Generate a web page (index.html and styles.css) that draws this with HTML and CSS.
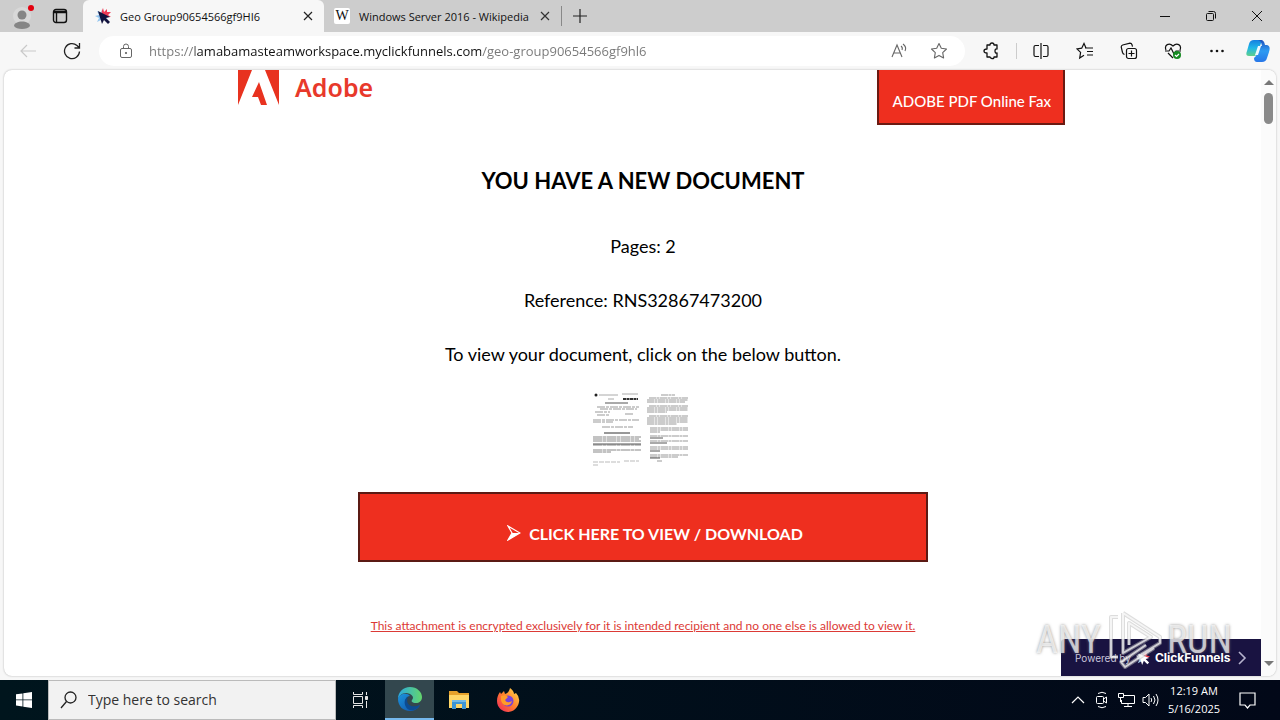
FILE: index.html
```html
<!DOCTYPE html>
<html lang="en">
<head>
  <meta charset="UTF-8">
  <meta name="viewport" content="width=device-width, initial-scale=1.0">
  <title>Desktop session</title>
  <link rel="stylesheet" href="styles.css">
</head>
<body>
  <div class="tabbar">
    <button class="profile" aria-label="Profile">
      <svg width="24" height="26" viewBox="0 0 24 26"><circle cx="10" cy="13" r="9" fill="#d8d8d8"/><circle cx="10" cy="12" r="4.500" fill="#858585"/><path d="M2 23c0-6 16-6 16 0-2 4-14 4-16 0z" fill="#858585"/><circle cx="19" cy="5" r="3" fill="#e3000f"/></svg>
    </button>
    <button class="workspaces" aria-label="Tab actions">
      <svg width="16" height="16" viewBox="0 0 16 16" fill="none" stroke="#111" stroke-width="1.4"><rect x="1.5" y="1.5" width="13" height="13" rx="2.5"/><path d="M2 4h12" stroke-width="2.500"/><path d="M4.500 4v10"/></svg>
    </button>
    <div class="tab active">
      <svg class="favicon" viewBox="0 0 16 16"><path d="M8 0l1 4 3-3v3l4 0-3 3 3 2-5 0-5-4z" fill="#ee3a55"/><path d="M7 1L6 5 2 3l2 4-4 1 4 2-2 4 4-2z" fill="#91c4ef"/><path d="M3 3l12 6-4 1 4 4-2 2-4-4-2 4z" fill="#12133e"/></svg>
      <span class="tab-title">Geo Group90654566gf9HI6</span>
      <button class="tab-close" aria-label="Close tab"><svg width="10" height="10" viewBox="0 0 10 10"><path d="M1 1l8 8M9 1L1 9" stroke="#222" stroke-width="1.2"/></svg></button>
    </div>
    <div class="tab">
      <span class="favicon wiki">W</span>
      <span class="tab-title">Windows Server 2016 - Wikipedia</span>
      <button class="tab-close" aria-label="Close tab"><svg width="10" height="10" viewBox="0 0 10 10"><path d="M1 1l8 8M9 1L1 9" stroke="#333" stroke-width="1.2"/></svg></button>
    </div>
    <button class="new-tab" aria-label="New tab"><svg width="14" height="14" viewBox="0 0 14 14"><path d="M7 0v14M0 7h14" stroke="#222" stroke-width="1.2"/></svg></button>
    <div class="window-buttons">
      <button aria-label="Minimize"><svg width="12" height="12" viewBox="0 0 12 12"><path d="M1 6.5h10" stroke="#111"/></svg></button>
      <button aria-label="Restore"><svg width="12" height="12" viewBox="0 0 12 12" fill="none" stroke="#111"><rect x="1.5" y="3.5" width="7" height="7" rx="1"/><path d="M3.5 1.5h5q2 0 2 2v5"/></svg></button>
      <button aria-label="Close"><svg width="12" height="12" viewBox="0 0 12 12"><path d="M1 1l10 10M11 1L1 11" stroke="#111"/></svg></button>
    </div>
  </div>

  <div class="toolbar">
    <button class="back" aria-label="Back"><svg width="18" height="18" viewBox="0 0 18 18" fill="none" stroke="#c9c9c9" stroke-width="1.2"><path d="M17 9H2M8 3L2 9l6 6"/></svg></button>
    <button class="reload" aria-label="Refresh"><svg width="18" height="18" viewBox="0 0 18 18" fill="none" stroke="#222" stroke-width="1.3"><path d="M16.5 9.5A7.5 7.5 0 1 1 14 3.5L16 5.5M16.500 1v5h-5"/></svg></button>
    <div class="address">
      <svg width="14" height="16" viewBox="0 0 14 16" fill="none" stroke="#666"><rect x="1.500" y="5.500" width="11" height="9" rx="1.500"/><path d="M4.500 5V3.500a2.500 2.500 0 0 1 5 0V5"/><circle cx="7" cy="10" r=".7" fill="#666"/></svg>
      <input class="url" type="text" aria-label="Address" value="https://lamabamasteamworkspace.myclickfunnels.com/geo-group90654566gf9hl6">
      <button class="read" aria-label="Read aloud"><svg width="17" height="16" viewBox="0 0 17 16" fill="none" stroke="#666" stroke-width="1.100"><path d="M1 14L6 2l5 12M3 10h6M10 3q2 1.500 1 4M12 1q4 3 2 7"/></svg></button>
      <button aria-label="Add to favorites"><svg width="18" height="18" viewBox="0 0 18 18" fill="none" stroke="#666" stroke-width="1.100" stroke-linejoin="round"><path d="M9 1.500l2.300 4.800 5.200.7-3.800 3.600.9 5.300L9 13.400l-4.600 2.500.9-5.300L1.500 7l5.200-.7z"/></svg></button>
    </div>
    <div class="tools">
      <button aria-label="Extensions"><svg width="18" height="18" viewBox="0 0 18 18" fill="none" stroke="#111" stroke-width="1.300"><path d="M4 3h3q0-2 2-2t2 2h3v4q-2-.5-2 2t2 2v4h-3q0 2-2 1.500T7 15H4v-4q-3 0-3-2t3-2z" stroke-linejoin="round"/></svg></button>
      <span class="divider"></span>
      <button aria-label="Split screen"><svg width="18" height="18" viewBox="0 0 18 18" fill="none" stroke="#111" stroke-width="1.200"><path d="M7 3.500H3.500q-1.500 0-1.500 1.500v8q0 1.500 1.500 1.500H7M11 3.500h3.500q1.500 0 1.500 1.500v8q0 1.500-1.500 1.500H11M9 1v16"/></svg></button>
      <button aria-label="Favorites"><svg width="18" height="18" viewBox="0 0 18 18" fill="none" stroke="#111" stroke-width="1.200"><path d="M10 6L8 1.500 5.700 6.200l-4.700.7 3.600 3.500L3.700 16 8 13.300M9 6h8M11 9.500h6M11 13h6"/></svg></button>
      <button aria-label="Collections"><svg width="18" height="18" viewBox="0 0 18 18" fill="none" stroke="#111" stroke-width="1.200"><rect x="6.500" y="6.500" width="10" height="10" rx="2"/><path d="M11.500 8.500v6M8.500 11.500h6M4.500 12.500q-1.500-.5-2-2L1.200 5q0-1.500 1.500-2L10 1.200q1.500 0 2 1.500l.5 2"/></svg></button>
      <button aria-label="Browser essentials"><svg width="18" height="18" viewBox="0 0 18 18" fill="none" stroke="#111" stroke-width="1.200"><path d="M2 8C0 3 5 0 9 4c4-4 9-1 7 4M1 9h4l2-3 3 6 2-3h5M4 11l5 5"/><circle cx="13" cy="13" r="4" fill="#168a22" stroke="none"/><path d="M11 13l1.500 1.500L15 12" stroke="#fff"/></svg></button>
      <button aria-label="Settings and more"><svg width="18" height="18" viewBox="0 0 18 18" fill="#111"><circle cx="3.500" cy="9" r="1.300"/><circle cx="9" cy="9" r="1.300"/><circle cx="14.500" cy="9" r="1.300"/></svg></button>
      <button class="copilot" aria-label="Copilot"><svg width="24" height="24" viewBox="0 0 24 24"><defs><linearGradient id="cp1" x2="0" y2="1"><stop stop-color="#147fe0"/><stop offset=".5" stop-color="#20b7e8"/><stop offset="1" stop-color="#5fd08a"/></linearGradient><linearGradient id="cp2" x2="0" y2="1"><stop stop-color="#1d4fbd"/><stop offset=".5" stop-color="#2e9bf2"/><stop offset="1" stop-color="#2877e8"/></linearGradient></defs><path d="M8 1h8l-4 12q-1 4-4 4H3q-4 0-2-5l2-7q1-4 5-4z" fill="url(#cp1)"/><path d="M12 1h3q3 0 4 5h2q4 1 2 7l-2 6q-1 4-5 4h-5q-3 0-3-4l2-2 3-10h3q-1-6-4-6z" fill="url(#cp2)"/><path d="M12 7h3l-3 9H9z" fill="#eefaff"/></svg></button>
    </div>
  </div>

  <div class="viewport">
    <main class="page">
      <article class="document">
        <header class="doc-header">
          <div class="brand">
            <svg width="41" height="35" viewBox="0 0 41 35" fill="#e8321f"><path d="M0 0h14L0 35zM27 0h14v35zM21 12l8 23h-6l-3-8h-6z"/></svg>
            <span>Adobe</span>
          </div>
          <div class="fax">ADOBE PDF Online Fax</div>
        </header>
        <h1>YOU HAVE A NEW DOCUMENT</h1>
        <p>Pages: 2</p>
        <p>Reference: RNS32867473200</p>
        <p>To view your document, click on the below button.</p>
        <svg class="thumbs" width="102" height="74" viewBox="0 0 102 74" fill="none" stroke="#888">
          <circle cx="6" cy="3" r="1.500" fill="#222" stroke="none"/>
          <path d="M9 3h19M32 2h16M18 7h6" stroke="#aaa"/>
          <path d="M33 7h15" stroke="#333" stroke-width="2" stroke-dasharray="3 .5"/>
          <path d="M15 11h23" stroke="#555"/>
          <path d="M7 15h42M10 17h37M5 20h15M35 22h9M7 23h13M3 28h46M3 30h20M12 35h31" stroke="#999" stroke-dasharray="8 1 3 1"/>
          <path d="M14 41h26" stroke="#333"/>
          <path d="M3 45h48M3 47h46M3 49h48M3 53h48M3 58h48M3 60h18" stroke-width="1.200" stroke-dasharray="9 .5 4 .5"/>
          <path d="M3 52h48" stroke="#555"/>
          <path d="M3 70h27M34 69h15M3 73h5" stroke="#bbb" stroke-dasharray="5 1"/>
          <path d="M71 3h14M59 6h39M57 8h41M57 10h38M59 14h39M57 16h41M57 18h41M57 20h20M59 24h39M57 26h41M57 28h41M57 30h41M57 32h30M60 36h38M60 38h38M60 40h10M60 44h38M60 49h38M60 55h38M60 57h38M60 63h38M60 65h28M67 69h5" stroke="#999" stroke-dasharray="7 .5 3 .5"/>
          <path d="M60 46h13M60 51h17M60 59h10M60 66h10" stroke="#555"/>
        </svg>
        <button class="download">
          <svg width="14" height="16" viewBox="0 0 14 16"><path d="M1 1l12 7L1 15l4-7z" fill="none" stroke="#fff" stroke-width="1.200"/><path d="M5 8h8L1 15z" fill="#fff"/></svg>
          CLICK HERE TO VIEW / DOWNLOAD
        </button>
        <a class="notice" href="#">This attachment is encrypted exclusively for it is intended recipient and no one else is allowed to view it.</a>
      </article>
    </main>
    <div class="scrollbar">
      <span class="arrow up"></span>
      <span class="thumb"></span>
      <span class="arrow down"></span>
    </div>
    <a class="powered" href="#">
      <span>Powered by</span>
      <svg width="14" height="14" viewBox="0 0 16 16"><path d="M8 0l1 4 3-3v4l4 1-5 3z" fill="#f0424f"/><path d="M7 1L6 5 2 3l2 4-4 1 4 2-2 4 4-2z" fill="#a9d0ef"/><path d="M3 3l12 5-4 1 4 4-2 2-4-4-2 5z" fill="#fff"/></svg>
      <strong>ClickFunnels</strong>
      <svg width="9" height="14" viewBox="0 0 9 14"><path d="M1 1l6 6-6 6" fill="none" stroke="#b6b3ce" stroke-width="1.600"/></svg>
    </a>
    <div class="watermark">
      <span>ANY</span>
      <svg width="56" height="64" viewBox="0 0 56 64" fill="none" stroke-linejoin="round"><g stroke="#bbb" stroke-opacity=".5" stroke-width="4"><path d="M12 9H5v40h7M17 5l37 24v6L31 49M17 5v40l28-16-22-14v22M48 40L19 59l-4-5 25-17"/></g><g stroke="#fff" stroke-opacity=".7" stroke-width="2"><path d="M12 9H5v40h7M17 5l37 24v6L31 49M17 5v40l28-16-22-14v22M48 40L19 59l-4-5 25-17"/></g></svg>
      <span>RUN</span>
    </div>
  </div>

  <div class="taskbar">
    <button class="start" aria-label="Start"><svg width="16" height="16" viewBox="0 0 16 16" fill="#fff"><path d="M0 2.300L6.500 1.400v6.100H0zM7.300 1.300L16 0v7.500H7.300zM0 8.300h6.500v6.200L0 13.600zM7.300 8.300H16V16l-8.700-1.300z"/></svg></button>
    <label class="search">
      <svg width="17" height="18" viewBox="0 0 17 18" fill="none" stroke="#222" stroke-width="1.300"><circle cx="10.500" cy="6.500" r="5.500"/><path d="M6.500 10.500L1 17"/></svg>
      <input type="text" aria-label="Search" placeholder="Type here to search">
    </label>
    <button class="app" aria-label="Task view"><svg width="16" height="16" viewBox="0 0 16 16" fill="none" stroke="#e6e6e6"><path d="M.5 0v2.500h9V0M.5 16v-2.500h9V16M.5 4.500h9v7h-9zM13.500 0v3M13.500 9v7"/><path d="M12.500 4.500h2v3h-2z" fill="#e6e6e6"/></svg></button>
    <button class="app open" aria-label="Edge"><svg width="24" height="24" viewBox="0 0 24 24"><defs><linearGradient id="e1"><stop stop-color="#2aa8df"/><stop offset="1" stop-color="#64d66c"/></linearGradient><linearGradient id="e2" x2="1" y2="1"><stop stop-color="#1b93dd"/><stop offset="1" stop-color="#114fa5"/></linearGradient></defs><path d="M0 12C0 5 5 0 12 0s12 5 12 10c0 4-3 6-6 6-4 0-5-2-4-3 3-3-1-7-6-7-4 0-7 3-8 6z" fill="url(#e1)"/><path d="M0 12c1-5 9-7 12-3-4 0-5 4-4 7 2 5 9 6 14 2-2 4-6 6-10 6C5 24 0 19 0 12z" fill="url(#e2)"/><path d="M10 10c-3 6 2 12 12 8-4 7-13 7-15 0-1-4 0-7 3-8z" fill="#0d4b91"/></svg></button>
    <button class="app" aria-label="File Explorer"><svg width="22" height="20" viewBox="0 0 22 20"><path d="M1 1h8l2 2h10v5H1z" fill="#e6a12b"/><path d="M1 5h20v13H1z" fill="#ffd667"/><path d="M4 10h14v9h-4v-5H8v5H4z" fill="#3d95d4"/><path d="M4 10h14v2H4z" fill="#72b9e7"/></svg></button>
    <button class="app" aria-label="Firefox"><svg width="24" height="24" viewBox="0 0 24 24"><defs><linearGradient id="f1" x1="1" x2="0" y2="1"><stop stop-color="#ffe34d"/><stop offset=".5" stop-color="#ff7d2c"/><stop offset="1" stop-color="#f12161"/></linearGradient></defs><path d="M14 0q4 3 4 6l2-1q4 4 3 9c-1 6-6 10-11 10S1 20 1 13c0-4 1-6 3-9l1 2 3-3 1 3q4-1 5-6z" fill="url(#f1)"/><circle cx="12" cy="13" r="5.500" fill="#7842d8"/><path d="M5 8q5-2 7 1l-3 3q2 4 7 1c-1 6-10 6-11-1z" fill="#ff9c28"/></svg></button>
    <div class="tray">
      <button aria-label="Show hidden icons"><svg width="14" height="16" viewBox="0 0 14 16" fill="none" stroke="#fff" stroke-width="1.200"><path d="M1 11l6-6 6 6"/></svg></button>
      <button aria-label="Meet now"><svg width="14" height="18" viewBox="0 0 14 18" fill="none" stroke="#fff"><rect x="1.500" y="5.500" width="7" height="7" rx="1"/><path d="M8.500 8l3-2v6l-3-2M3 2.500q4-2.500 8 0M3 15.500q4 2.500 8 0"/></svg></button>
      <button aria-label="Network"><svg width="17" height="16" viewBox="0 0 17 16" fill="none" stroke="#fff"><path d="M6 3.500h10.500v8H3.500V8M10 11.500v3M6 14.500h8M.5 1.500h5v4h-5zM2.500 5.500V10"/></svg></button>
      <button aria-label="Volume"><svg width="17" height="16" viewBox="0 0 17 16" fill="none" stroke="#fff"><path d="M1 5.500h2.500L7 2v12l-3.500-3.500H1zM9 6q1.500 2 0 4M11.500 4q3 4 0 8M14 2q4 6 0 12"/></svg></button>
      <div class="clock"><span>12:19 AM</span><span>5/16/2025</span></div>
      <button class="notifications" aria-label="Notifications"><svg width="17" height="17" viewBox="0 0 17 17" fill="none" stroke="#fff" stroke-width="1.200"><path d="M1 1h15v12h-5l-2.500 3L6 13H1z"/></svg></button>
    </div>
  </div>
</body>
</html>
```
FILE: styles.css
```css
* {
  box-sizing: border-box;
}

body {
  margin: 0;
  height: 100vh;
  display: flex;
  flex-direction: column;
  overflow: hidden;
  background: #f7f7f7;
  font-family: "Open Sans", "Noto Sans", sans-serif;
  color: #111;
}

button {
  display: flex;
  align-items: center;
  justify-content: center;
  padding: 0;
  border: 0;
  background: none;
  font-family: inherit;
  flex-shrink: 0;
}

svg {
  flex-shrink: 0;
}

/* Tabs */
.tabbar {
  display: flex;
  height: 32px;
  background: #cdcdcd;
  font-size: 11px;
}

.profile {
  width: 36px;
  padding-left: 12px;
}

.workspaces {
  width: 47px;
}

.tab {
  display: flex;
  align-items: center;
  width: 237px;
  padding: 0 8px 0 10px;
}

.tab.active {
  width: 241px;
  padding-left: 12px;
  background: #f7f7f7;
  border-radius: 6px 6px 0 0;
}

.favicon {
  width: 16px;
  height: 16px;
  margin-right: 9px;
}

.wiki {
  border-radius: 2px;
  background: #fff;
  font: 14px/16px "Liberation Serif", serif;
  text-align: center;
}

.tab-title {
  flex: 1;
  white-space: nowrap;
}

.tab-close {
  width: 16px;
  height: 16px;
}

.new-tab {
  width: 36px;
  margin: 6px 0;
  border-left: 1px solid #888;
}

.window-buttons {
  display: flex;
  margin-left: auto;
}

.window-buttons button {
  width: 46px;
}

/* Toolbar */
.toolbar {
  display: flex;
  align-items: center;
  height: 38px;
  flex-shrink: 0;
}

.back,
.reload {
  width: 44px;
}

.back {
  margin-left: 6px;
}

.address {
  display: flex;
  align-items: center;
  flex: 1;
  height: 30px;
  margin-left: 5px;
  padding: 0 17px 0 20px;
  border-radius: 15px;
  background: #fff;
}

.url {
  flex: 1;
  min-width: 0;
  margin-left: 16px;
  padding: 0;
  border: 0;
  outline: none;
  background: linear-gradient(to right, #777 46px, #111 46px, #111 332px, #777 332px);
  background-clip: text;
  -webkit-background-clip: text;
  color: transparent;
  font: 13px/20px "Open Sans", sans-serif;
}

.read {
  margin-right: 22px;
}

.tools {
  display: flex;
  align-items: center;
  margin: 0 3px 0 5px;
}

.tools button {
  width: 44px;
}

.divider {
  width: 1px;
  height: 16px;
  margin: 0 2px;
  background: #ccc;
}

.tools .copilot {
  width: 38px;
}

/* Page */
.viewport {
  position: relative;
  display: flex;
  flex: 1;
  min-height: 0;
  margin: 0 4px 4px;
  border-radius: 8px;
  background: #fff;
  box-shadow: 0 0 2px #aaa;
}

.page {
  flex: 1;
  padding-left: 21px;
  overflow: hidden;
  font-family: Lato, "Open Sans", sans-serif;
}

.document {
  display: flex;
  flex-direction: column;
  align-items: center;
  max-width: 844px;
  margin: 0 auto;
}

.doc-header {
  display: flex;
  justify-content: space-between;
  align-self: stretch;
  padding-left: 17px;
}

.brand {
  display: flex;
  gap: 16px;
  color: #e8392b;
  font: 600 25px/35px "Noto Sans", sans-serif;
}

.fax {
  padding: 19px 12px 10px 14px;
  border: 2px solid #6b1a12;
  border-top: 0;
  background: #ee2f1f;
  color: #fff;
  font-size: 15px;
  font-weight: 500;
  line-height: 24px;
}

.document h1 {
  margin: 40px 0 9px;
  color: #000;
  font-size: 22px;
  line-height: 32px;
}

.document p {
  margin: 28px 0 0;
  color: #000;
  font-size: 18px;
  line-height: 24px;
}

.document p + p {
  margin-top: 30px;
}

.thumbs {
  margin: 26px 4px 26px 0;
}

.download {
  gap: 8px;
  width: 100%;
  max-width: 570px;
  height: 70px;
  padding: 12px 0 0 24px;
  border: 2px solid #5b1a14;
  background: #ee2f1f;
  color: #fff;
  font-size: 16px;
  font-weight: 700;
}

.notice {
  margin-top: 54px;
  color: #dc3a36;
  font-size: 12px;
  line-height: 20px;
  white-space: nowrap;
}

.scrollbar {
  display: flex;
  flex-direction: column;
  align-items: center;
  width: 15px;
  padding: 10px 0;
  border-radius: 0 8px 8px 0;
  background: #fbfbfb;
}

.arrow {
  border: 5px solid transparent;
}

.up {
  border-top: 0;
  border-bottom-color: #777;
}

.down {
  margin-top: auto;
  border-bottom: 0;
  border-top-color: #777;
}

.thumb {
  width: 9px;
  height: 31px;
  margin-top: 8px;
  border-radius: 5px;
  background: #8a8a8a;
}

.powered {
  position: absolute;
  right: 15px;
  bottom: 0;
  display: flex;
  align-items: center;
  gap: 5px;
  width: 200px;
  height: 37px;
  padding: 0 14px;
  border-radius: 4px 0 0 0;
  background: #191341;
  color: #c9c6dc;
  font: 10px/16px Inter, sans-serif;
  text-decoration: none;
  white-space: nowrap;
}

.powered strong {
  flex: 1;
  color: #fff;
  font-size: 12px;
}

.watermark {
  position: absolute;
  right: 44px;
  bottom: 4px;
  display: flex;
  align-items: center;
  gap: 5px;
  color: rgba(255, 255, 255, 0.7);
  font: 38px/44px "Liberation Sans Narrow", "Roboto Condensed", sans-serif;
  text-shadow: 0 0 3px rgba(120, 120, 120, 0.8);
  pointer-events: none;
}

/* Taskbar */
.taskbar {
  display: flex;
  height: 40px;
  flex-shrink: 0;
  background: linear-gradient(to right, #00151d, #020818);
  color: #fff;
}

.start {
  width: 48px;
}

.app {
  width: 49px;
}

.open {
  border-bottom: 2px solid #76b9ed;
  background: #33474e;
}

.search {
  display: flex;
  align-items: center;
  gap: 11px;
  width: 288px;
  padding-left: 11px;
  border: 1px solid #bbb;
  background: #f2f2f2;
}

.search input {
  flex: 1;
  min-width: 0;
  padding: 0;
  border: 0;
  outline: none;
  background: none;
  font: 14px/20px "Open Sans", sans-serif;
}

.search input::placeholder {
  color: #333;
}

.tray {
  display: flex;
  align-items: center;
  margin-left: auto;
  padding-right: 12px;
}

.tray button {
  width: 24px;
  height: 40px;
}

.clock {
  display: flex;
  flex-direction: column;
  align-items: center;
  width: 64px;
  font-size: 11px;
  line-height: 18px;
}

.tray .notifications {
  width: 42px;
}
```
